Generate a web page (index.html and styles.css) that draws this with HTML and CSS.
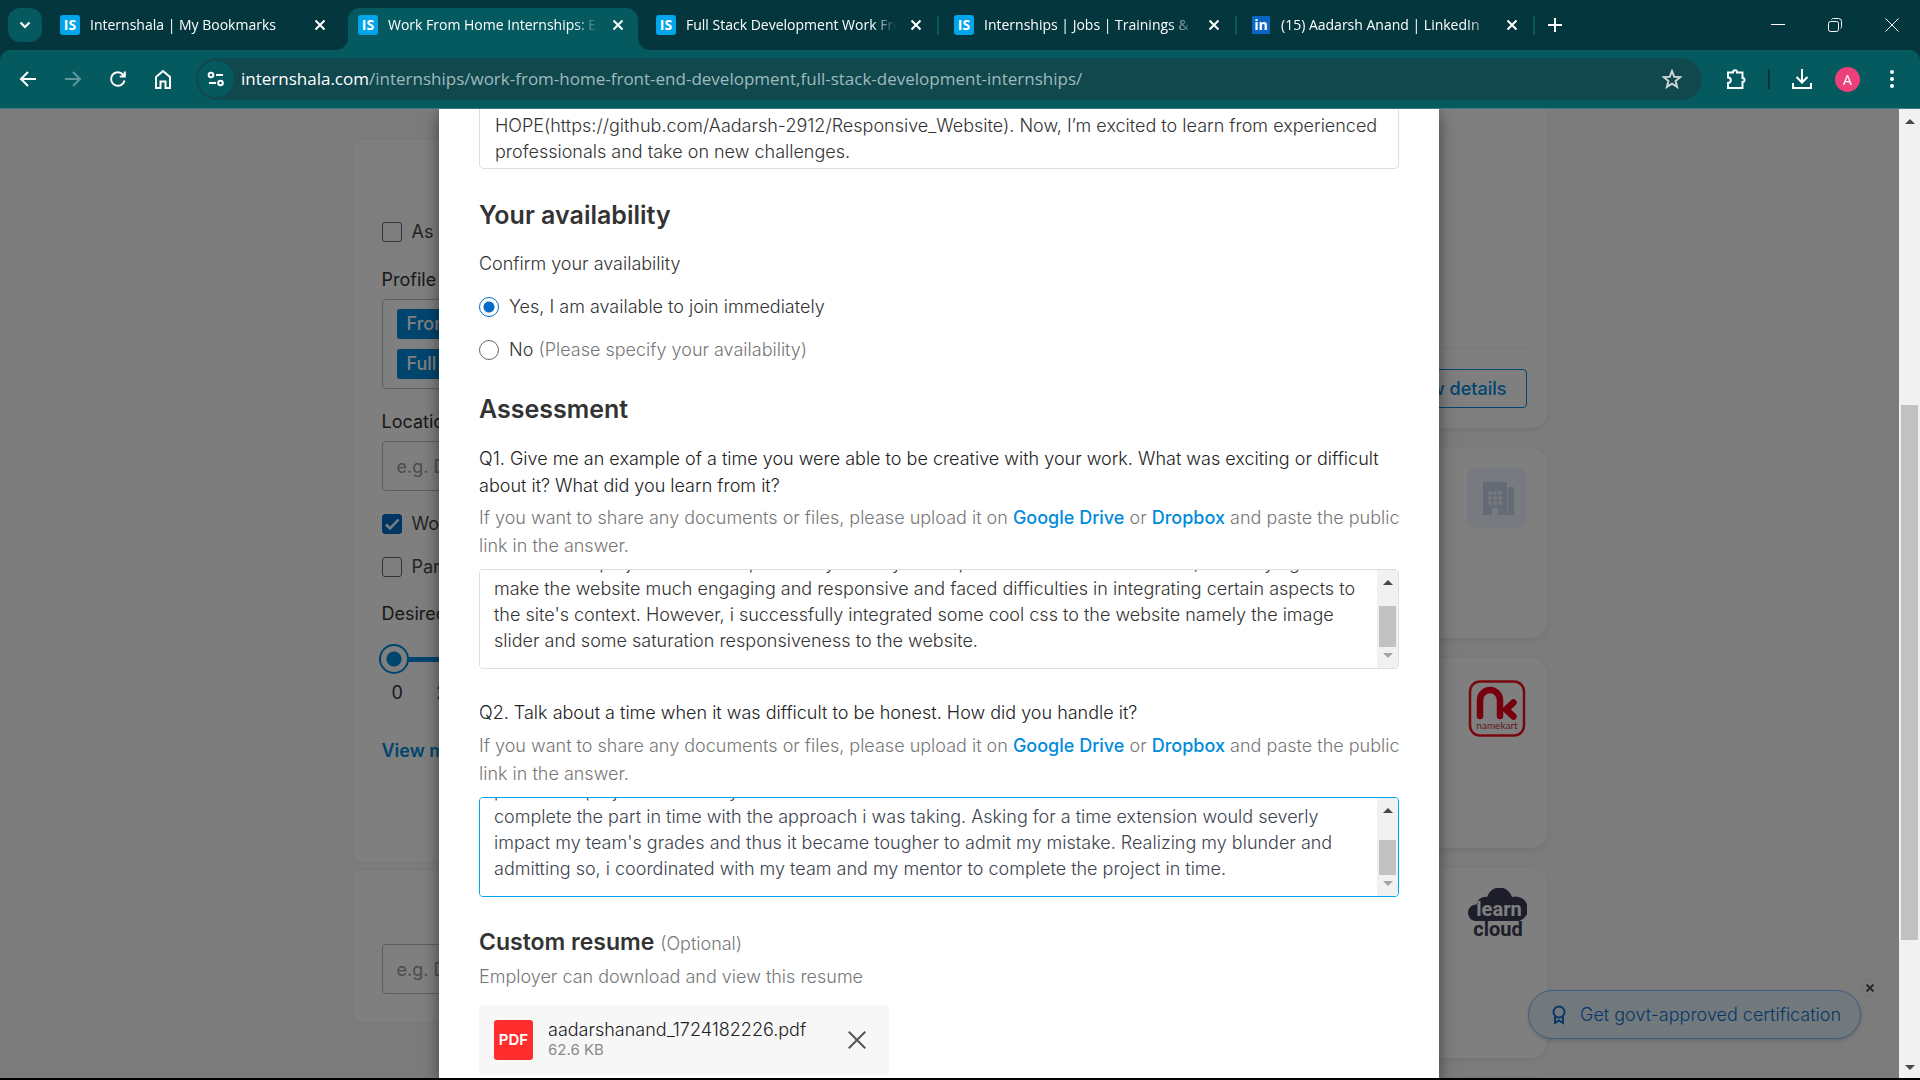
FILE: index.html
```html
<!DOCTYPE html>
<html lang="en">
<head>
<meta charset="utf-8">
<title>Work From Home Internships</title>
<link rel="stylesheet" href="styles.css">
</head>
<body>
<div class="browser">
  <header class="tabstrip">
    <button class="tab-search" type="button" aria-label="Search tabs"><svg width="12" height="8" viewBox="0 0 12 8"><path d="M1.500 1.500 6 6l4.500-4.500" fill="none" stroke="currentColor" stroke-width="2.200"/></svg></button>
    <nav class="tabs">
      <div class="tab"><span class="fav">IS</span><span class="tab-title">Internshala | My Bookmarks</span><button class="tab-close" type="button" aria-label="Close tab"><svg width="12" height="12" viewBox="0 0 12 12"><path d="M1.500 1.500l9 9m0-9l-9 9"/></svg></button></div>
      <div class="tab active"><span class="fav">IS</span><span class="tab-title">Work From Home Internships: Explore</span><button class="tab-close" type="button" aria-label="Close tab"><svg width="12" height="12" viewBox="0 0 12 12"><path d="M1.500 1.500l9 9m0-9l-9 9"/></svg></button></div>
      <div class="tab sep"><span class="fav">IS</span><span class="tab-title">Full Stack Development Work From</span><button class="tab-close" type="button" aria-label="Close tab"><svg width="12" height="12" viewBox="0 0 12 12"><path d="M1.500 1.500l9 9m0-9l-9 9"/></svg></button></div>
      <div class="tab sep"><span class="fav">IS</span><span class="tab-title">Internships | Jobs | Trainings &amp; Fresher</span><button class="tab-close" type="button" aria-label="Close tab"><svg width="12" height="12" viewBox="0 0 12 12"><path d="M1.500 1.500l9 9m0-9l-9 9"/></svg></button></div>
      <div class="tab sep"><span class="fav linkedin">in</span><span class="tab-title">(15) Aadarsh Anand | LinkedIn</span><button class="tab-close" type="button" aria-label="Close tab"><svg width="12" height="12" viewBox="0 0 12 12"><path d="M1.500 1.500l9 9m0-9l-9 9"/></svg></button></div>
    </nav>
    <button class="new-tab" type="button" aria-label="New tab"><svg width="14" height="14" viewBox="0 0 14 14"><path d="M7 0v14M0 7h14" stroke="currentColor" stroke-width="2"/></svg></button>
    <div class="window-controls">
      <button type="button" aria-label="Minimize"><svg width="14" height="14" viewBox="0 0 14 14"><path d="M0 6.500h14"/></svg></button>
      <button type="button" aria-label="Restore"><svg width="14" height="14" viewBox="0 0 14 14"><rect x=".5" y="3.500" width="10" height="10" rx="2"/><path d="M3.500 1.500C4 .8 4.500.5 5.500.5H10.500a3 3 0 0 1 3 3V8.500c0 1-.3 1.500-1 2"/></svg></button>
      <button type="button" aria-label="Close window"><svg width="14" height="14" viewBox="0 0 14 14"><path d="M.5.5l13 13m0-13l-13 13"/></svg></button>
    </div>
  </header>
  <div class="toolbar">
    <div class="nav-buttons">
      <button type="button" aria-label="Back"><svg width="18" height="18" viewBox="0 0 18 18"><path d="M17 9H2M9 2L2 9l7 7"/></svg></button>
      <button class="dim" type="button" aria-label="Forward"><svg width="18" height="18" viewBox="0 0 18 18"><path d="M1 9h15M9 2l7 7-7 7"/></svg></button>
      <button type="button" aria-label="Reload"><svg width="18" height="18" viewBox="0 0 18 18"><path d="M15.500 10.500A6.800 6.800 0 1 1 14 4.500l1.500 1.700M15.800 1.500v5h-5"/></svg></button>
      <button type="button" aria-label="Home"><svg width="18" height="20" viewBox="0 0 18 20"><path d="M2 8l7-6 7 6v11h-4.500v-6.500h-5V19H2z"/></svg></button>
    </div>
    <div class="omnibox">
      <button class="site-info" type="button" aria-label="Site information"><svg width="18" height="16" viewBox="0 0 18 16"><circle cx="4" cy="4" r="2.300"/><path d="M9 4h7M2 12h7"/><circle cx="13.500" cy="12" r="2.300"/></svg></button>
      <div class="url"><span>internshala.com</span>/internships/work-from-home-front-end-development,full-stack-development-internships/</div>
      <button class="star" type="button" aria-label="Bookmark"><svg width="20" height="20" viewBox="0 0 20 20"><path d="M10 2l2.200 5.700 6 .4-4.600 3.900 1.500 5.900L10 14.600l-5.100 3.300 1.500-5.900L1.800 8.100l6-.4z"/></svg></button>
    </div>
    <div class="actions">
      <button type="button" aria-label="Extensions"><svg width="24" height="24" viewBox="0 0 24 24"><path d="M4 5.500h5a2 2.300 0 0 1 4 0h5.500v5.500a2 2 0 0 1 0 4V21H4v-5a2.600 2.600 0 0 0 0-5.500z"/></svg></button>
      <i class="divider"></i>
      <button type="button" aria-label="Downloads"><svg width="22" height="22" viewBox="0 0 22 22"><path d="M11 1v13M5.500 9l5.500 5.500L16.500 9M2 15v5h18v-5"/></svg></button>
      <button class="avatar" type="button">A</button>
      <button type="button" aria-label="Menu"><svg width="6" height="18" viewBox="0 0 6 18" class="dots"><circle cx="3" cy="2" r="2"/><circle cx="3" cy="9" r="2"/><circle cx="3" cy="16" r="2"/></svg></button>
    </div>
  </div>

  <div class="viewport">
    <div class="page">
      <div class="columns">
        <aside class="filters">
          <section class="card filter-main">
            <label class="check"><input type="checkbox">As per my preferences</label>
            <div class="field">
              <span class="label">Profile</span>
              <div class="chips"><span class="chip">Front End Development</span><span class="chip">Full Stack Development</span></div>
            </div>
            <div class="field location">
              <label class="label" for="loc">Location</label>
              <input class="text" id="loc" type="text" placeholder="e.g. Delhi">
            </div>
            <label class="check wfh"><input type="checkbox" checked>Work from home</label>
            <label class="check part"><input type="checkbox">Part-time</label>
            <label class="label stipend" for="stipend">Desired minimum monthly stipend</label>
            <input class="range" id="stipend" type="range" min="0" max="10" value="0">
            <div class="ticks"><span>0</span><span>2K</span><span>4K</span><span>6K</span><span>8K</span><span>10K</span></div>
            <a class="more" href="#">View more filters</a>
          </section>
          <section class="card keyword">
            <input class="text" type="text" aria-label="Keyword search" placeholder="e.g. Design, Mumbai">
          </section>
        </aside>
        <main class="results">
          <article class="job first"><div class="job-foot"><a class="details" href="#">View details</a></div></article>
          <article class="job">
            <svg class="logo" viewBox="0 0 60 60"><rect width="60" height="60" rx="8" fill="#eef5ff"/><g fill="#c9d7e8"><path d="M16 15q0-1 1-1h22q1 0 1 1v31H31v-5q0-1-3-1t-3 1v5H16zM41 19h5q1 0 1 1v26h-6z"/><path d="M15 45h10v2H15zm16 0h17v2H31z"/></g><g fill="#eef5ff"><circle cx="23" cy="25" r="2"/><circle cx="28" cy="25" r="2"/><circle cx="33" cy="25" r="2"/><circle cx="23" cy="30" r="2"/><circle cx="28" cy="30" r="2"/><circle cx="33" cy="30" r="2"/><circle cx="23" cy="35" r="2"/><circle cx="28" cy="35" r="2"/><circle cx="33" cy="35" r="2"/></g></svg>
          </article>
          <article class="job">
            <svg class="logo" viewBox="0 0 60 60"><rect x="3" y="3.500" width="54" height="54" rx="10" fill="none" stroke="#f00f1c" stroke-width="2.500"/><path d="M13 38V22a10 10 0 0 1 20 0V38M46.500 24.500L39 31.500l7.500 7" fill="none" stroke="#f00018" stroke-width="6.500" stroke-linecap="round" stroke-linejoin="round"/><text x="30" y="51" text-anchor="middle" class="namekart">namekart</text></svg>
          </article>
          <article class="job">
            <svg class="logo" viewBox="0 0 60 60"><path d="M8 33a8.300 8.300 0 0 1 1.500-16.500A9 9 0 0 1 20 9a13 13 0 0 1 25 0 12 12 0 0 1 7 24z" fill="#3a3c54"/><text x="32" y="28" text-anchor="middle" class="lc light">learn</text><text x="31" y="48" text-anchor="middle" class="lc">cloud</text></svg>
          </article>
          <article class="job"></article>
        </main>
      </div>
      <div class="certify">
        <button class="cert-btn" type="button"><svg width="14" height="20" viewBox="0 0 14 20"><circle cx="7" cy="7" r="5.500"/><path d="M3 11.500V18l4-2.500 4 2.500v-6.500"/></svg>Get govt-approved certification</button>
        <button class="cert-close" type="button" aria-label="Dismiss"><svg width="8" height="8" viewBox="0 0 8 8"><path d="M.5.5l7 7m0-7l-7 7"/></svg></button>
      </div>
    </div>

    <div class="backdrop">
      <form class="modal">
        <textarea class="cover" aria-label="Cover letter" spellcheck="false">HOPE(https://github.com/Aadarsh-2912/Responsive_Website). Now, I’m excited to learn from experienced
professionals and take on new challenges.</textarea>

        <h2>Your availability</h2>
        <p class="confirm">Confirm your availability</p>
        <label class="radio"><input type="radio" name="avail" checked>Yes, I am available to join immediately</label>
        <label class="radio"><input type="radio" name="avail"><span>No <span class="muted">(Please specify your availability)</span></span></label>

        <h2 class="assessment">Assessment</h2>
        <label class="question" for="q1">Q1. Give me an example of a time you were able to be creative with your work. What was exciting or difficult about it? What did you learn from it?</label>
        <p class="help">If you want to share any documents or files, please upload it on <a href="#">Google Drive</a> or <a href="#">Dropbox</a> and paste the public link in the answer.</p>
        <div class="answer">
          <textarea id="q1" spellcheck="false">For a recent project that i took personally already had a portfolio website as a theme, i was trying
make the website much engaging and responsive and faced difficulties in integrating certain aspects to
the site's context. However, i successfully integrated some cool css to the website namely the image
slider and some saturation responsiveness to the website.</textarea>
          <div class="bar one" aria-hidden="true"><i class="up"></i><i class="thumb"></i><i class="down"></i></div>
        </div>

        <label class="question second" for="q2">Q2. Talk about a time when it was difficult to be honest. How did you handle it?</label>
        <p class="help">If you want to share any documents or files, please upload it on <a href="#">Google Drive</a> or <a href="#">Dropbox</a> and paste the public link in the answer.</p>
        <div class="answer focused">
          <textarea id="q2" spellcheck="false">part of the project and i really was not able to
complete the part in time with the approach i was taking. Asking for a time extension would severly
impact my team's grades and thus it became tougher to admit my mistake. Realizing my blunder and
admitting so, i coordinated with my team and my mentor to complete the project in time.</textarea>
          <div class="bar two" aria-hidden="true"><i class="up"></i><i class="thumb"></i><i class="down"></i></div>
        </div>

        <h3>Custom resume <small>(Optional)</small></h3>
        <p class="resume-help">Employer can download and view this resume</p>
        <div class="file">
          <span class="pdf">PDF</span>
          <div class="file-text"><span class="file-name">aadarshanand_1724182226.pdf</span><span class="file-size">62.6 KB</span></div>
          <button class="file-remove" type="button" aria-label="Remove resume"><svg width="18" height="18" viewBox="0 0 18 18"><path d="M.8.8l16.400 16.400m0-16.400L.8 17.200"/></svg></button>
        </div>
      </form>
    </div>
    <div class="bar page-bar" aria-hidden="true"><i class="up"></i><i class="thumb"></i><i class="down"></i></div>
  </div>
</div>
<script src="script.js"></script>
</body>
</html>
```
FILE: styles.css
```css
* { box-sizing: border-box; }
body { margin: 0; font-family: Inter, "Liberation Sans", sans-serif; font-size: 18px; font-weight: 300; line-height: 26px; color: #333; background: #000; }
button { border: 0; padding: 0; margin: 0; background: none; color: inherit; font: inherit; }
svg { display: block; flex: none; }
p, h2, h3 { margin: 0; }
a { text-decoration: none; color: #008bdc; }

.browser { height: 100vh; display: flex; flex-direction: column; border-bottom: 2px solid #000; background: #03373d; }

/* tab strip */
.tabstrip { height: 50px; display: flex; align-items: center; padding-left: 8px; color: #fff; font: 14px/22px "Open Sans", "Noto Sans", sans-serif; }
.tab-search { width: 34px; height: 34px; border-radius: 12px; background: #055a60; display: grid; place-items: center; margin-right: 8px; }
.tabs { display: flex; flex: 0 1 1490px; min-width: 0; align-self: stretch; padding-top: 8px; }
.tab { position: relative; flex: 1 1 0; min-width: 0; display: flex; align-items: center; padding: 0 22px 8px 10px; gap: 10px; }
.tab.active { background: #055a60; border-radius: 12px 12px 0 0; margin-right: 8px; padding-right: 14px; }
.tab.active::before, .tab.active::after { content: ""; position: absolute; bottom: 0; width: 12px; height: 12px; }
.tab.active::before { left: -12px; background: radial-gradient(circle at 0 0, transparent 12px, #055a60 12px); }
.tab.active::after { right: -12px; background: radial-gradient(circle at 100% 0, transparent 12px, #055a60 12px); }
.tab.sep::after { content: ""; position: absolute; right: 5px; top: 8px; width: 2px; height: 19px; background: #055a60; }
.fav { flex: none; width: 20px; height: 20px; border-radius: 3px; background: #00a5ec; font: bold 14px/20px "Open Sans", sans-serif; text-align: center; }
.fav.linkedin { width: 18px; height: 18px; line-height: 17px; background: #0a66c2; border-radius: 1px; margin-right: 1px; }
.tab-title { flex: 1; overflow: hidden; white-space: nowrap; -webkit-mask-image: linear-gradient(90deg, #000 calc(100% - 24px), transparent); mask-image: linear-gradient(90deg, #000 calc(100% - 24px), transparent); }
.tab-close svg { stroke: #fff; stroke-width: 2; margin: 0 0 0 4px; }
.new-tab { margin-left: 8px; }
.window-controls { margin-left: auto; display: flex; }
.window-controls button { width: 57px; height: 50px; display: grid; place-items: center; }
.window-controls svg { fill: none; stroke: #fff; stroke-width: 1; }

/* toolbar */
.toolbar { height: 59px; flex: none; display: flex; align-items: center; background: #055a60; border-bottom: 1px solid #3d7d82; border-radius: 10px 10px 0 0; color: #fff; padding-left: 5px; }
.toolbar svg { fill: none; stroke: currentColor; stroke-width: 2; }
.nav-buttons { display: flex; width: 191px; }
.nav-buttons button { width: 45px; height: 42px; display: grid; place-items: center; }
.dim { color: #5d999c; }
.omnibox { flex: 1; height: 42px; border-radius: 21px; background: #10484e; display: flex; align-items: center; padding: 0 20px 0 2px; }
.site-info { width: 36px; height: 36px; border-radius: 18px; background: #055a60; display: grid; place-items: center; }
.url { flex: 1; margin-left: 7px; font: 17px/24px "Open Sans", "Noto Sans", sans-serif; color: #9fbabc; white-space: nowrap; }
.url span { color: #fff; }
.star { color: #c9d3d3; }
.actions { width: 218px; display: flex; align-items: center; padding-left: 22px; }
.divider { width: 2px; height: 20px; background: #03373d; margin: 0 21px 0 20px; }
.avatar { width: 25px; height: 25px; border-radius: 50%; background: #ec407a; font: 14px/25px "Open Sans", sans-serif; margin: 0 29px 0 22px; }
.toolbar .dots { fill: #fff; stroke: none; }

/* page behind the dialog */
.viewport { position: relative; flex: 1; min-height: 0; overflow: hidden; display: flex; background: #f8f8f8; }
.page { position: relative; flex: 1; min-width: 0; overflow: hidden; font-weight: 400; }
.columns { width: 1194px; max-width: 100%; margin: 0 auto; display: grid; grid-template-columns: 370px 1fr; gap: 20px; }
.filters { padding-top: 30px; color: #333; }
.card { background: #fff; border: 1px solid #f0f0f0; border-radius: 8px; padding: 0 28px; margin-bottom: 6px; display: flex; flex-direction: column; }
.filter-main { height: 724px; padding-top: 79px; }
.check { display: flex; align-items: center; gap: 10px; height: 26px; color: #484848; }
.check input, .radio input { appearance: none; flex: none; margin: 0; width: 20px; height: 20px; border: 1px solid #666; border-radius: 3px; background: #fff; }
.check input:checked { border-color: #006bc9; background: #006bc9 url("data:image/svg+xml,%3Csvg xmlns='http://www.w3.org/2000/svg' viewBox='0 0 18 18'%3E%3Cpath d='M3 9.500l4 4L15.500 4.500' fill='none' stroke='%23fff' stroke-width='2.500'/%3E%3C/svg%3E") center / 18px no-repeat; }
.field { margin-top: 22px; }
.label { display: block; color: #333; }
.chips { margin-top: 6px; height: 90px; border: 1px solid #bbb; border-radius: 4px; padding: 9px 14px; display: flex; flex-direction: column; align-items: flex-start; gap: 10px; }
.chip { background: #008bdc; color: #fff; border-radius: 3px; font-weight: 500; line-height: 30px; padding: 0 10px; }
.text { display: block; width: 100%; height: 50px; border: 1px solid #bbb; border-radius: 4px; background: #fff; padding: 0 14px; font: inherit; }
.text::placeholder { color: #999; }
.location { margin-top: 20px; }
.location .text { margin-top: 6px; }
.wfh { margin-top: 20px; }
.part { margin-top: 17px; }
.stipend { margin-top: 21px; }
.range { appearance: none; margin: 17px 0 0 -3px; height: 30px; background: linear-gradient(#008bdc, #008bdc) center / 100% 5px no-repeat; }
.range::-webkit-slider-thumb { appearance: none; width: 30px; height: 30px; border-radius: 50%; border: 2px solid #008bdc; background: radial-gradient(circle, #008bdc 7px, #fff 8px); }
.ticks { display: flex; justify-content: space-between; margin: 6px 0 0 10px; }
.more { margin-top: 32px; font-weight: 600; }
.keyword { height: 154px; padding-top: 74px; }
.job { position: relative; height: 190px; margin-bottom: 20px; border-radius: 16px; background: #fff; box-shadow: 0 2px 6px rgba(0, 0, 0, .08); padding: 20px; display: flex; justify-content: flex-end; }
.job.first { height: 319px; border-radius: 0 0 16px 16px; align-items: flex-end; }
.job-foot { flex: 1; border-top: 1px solid #eee; padding-top: 20px; display: flex; justify-content: flex-end; }
.details { border: 1px solid #008bdc; border-radius: 4px; padding: 0 19px; line-height: 37px; font-weight: 500; }
.logo { width: 60px; height: 60px; }
.namekart { font: 10px Lato, sans-serif; fill: #c0383e; }
.lc { font: bold 20px Roboto, sans-serif; fill: #3a3c54; }
.lc.light { fill: #fff; }
.certify { position: absolute; right: 20px; bottom: 39px; display: flex; align-items: flex-end; font-weight: 300; }
.cert-btn { height: 49px; width: 333px; border: 1px solid #7db8ff; border-radius: 25px; background: #e2f3fa; color: #0f6fd0; display: flex; align-items: center; gap: 14px; padding-left: 23px; white-space: nowrap; box-shadow: 0 2px 4px rgba(0, 0, 0, .15); }
.certify svg { fill: none; stroke: currentColor; stroke-width: 2; }
.cert-close { width: 18px; height: 18px; margin-bottom: 42px; border: 1px solid #eee; border-radius: 9px; display: grid; place-items: center; }
.certify .cert-close svg { stroke: #555; }

/* application dialog */
.backdrop { position: absolute; inset: 0 21px 0 0; background: rgba(0, 0, 0, .5); padding-right: 21px; display: flex; justify-content: center; }
.modal { width: 1000px; max-width: 100%; min-height: 100%; background: #fff; padding: 0 40px; box-shadow: 0 5px 15px rgba(0, 0, 0, .5); }
.cover { display: block; width: 100%; height: 60px; border: 1px solid #ddd; border-top: 0; border-radius: 0 0 5px 5px; padding: 4px 15px 3px; resize: none; overflow: hidden; font: inherit; color: #333; outline: 0; }
h2 { font-size: 25px; line-height: 30px; font-weight: 600; color: #333; margin-top: 31px; }
.confirm { margin: 21px 0 17px; }
.radio { display: flex; align-items: center; gap: 10px; margin-bottom: 17px; }
.radio input { border-radius: 50%; }
.radio input:checked { border-color: #006bc9; background: radial-gradient(circle, #006bc9 5px, #fff 6px); }
.muted, .help, .resume-help, small { color: #777; }
.assessment { margin-top: 31px; }
.question { display: block; color: #222; line-height: 27px; margin: 21px 0 5px; }
.question.second { margin: 30px 0 6px; }
.help { line-height: 28px; margin-right: -20px; }
.help a { font-weight: 500; }
.answer { margin-top: 9px; height: 100px; border: 1px solid #ddd; border-radius: 4px; display: flex; overflow: hidden; }
.answer textarea { flex: 1; min-width: 0; height: 98px; border: 0; padding: 14px 0 14px 14px; resize: none; overflow: hidden; font: inherit; color: #333; outline: 0; white-space: pre-wrap; }
.answer.focused { border-color: #00a5ec; }
.answer.focused textarea { color: #3c434e; }
h3 { font-size: 23px; line-height: 30px; font-weight: 600; color: #333; margin-top: 30px; }
small { font-size: 18px; font-weight: 300; }
.resume-help { margin: 5px 0 15px; }
.file { width: 410px; max-width: 100%; height: 70px; border-radius: 4px; background: #f7f7f7; display: flex; align-items: center; padding: 0 23px 0 15px; }
.pdf { width: 39px; height: 40px; border-radius: 3px; background: #ff2d2d; color: #fff; font-size: 15px; font-weight: 600; line-height: 40px; text-align: center; margin-right: 15px; }
.file-text { flex: 1; display: flex; flex-direction: column; }
.file-name { line-height: 20px; color: #222; }
.file-size { font-size: 15px; font-weight: 400; line-height: 20px; color: #8a8a8a; }
.file-remove svg { stroke: #555; stroke-width: 2; }

/* scroll bars */
.bar { flex: none; width: 21px; background: #f1f1f1; display: flex; flex-direction: column; align-items: center; }
.bar .up, .bar .down { border: 5px solid transparent; width: 0; }
.bar .up { border-top: 0; border-bottom-color: #484848; margin-top: 10px; }
.bar .down { border-bottom: 0; border-top-color: #a3a3a3; margin: auto 0 10px; }
.bar .thumb { width: 17px; background: #c1c1c1; }
.one .thumb { margin-top: 21px; height: 41px; }
.two .thumb { margin-top: 27px; height: 35px; }
.page-bar .thumb { margin-top: 281px; height: 535px; }
.page-bar .down { border-top-color: #484848; margin-bottom: 8px; }
```
FILE: script.js
```javascript
// Keep the end of each answer in view
document.querySelectorAll('.answer textarea').forEach(function (box) {
  box.scrollTop = box.scrollHeight;
});
```
